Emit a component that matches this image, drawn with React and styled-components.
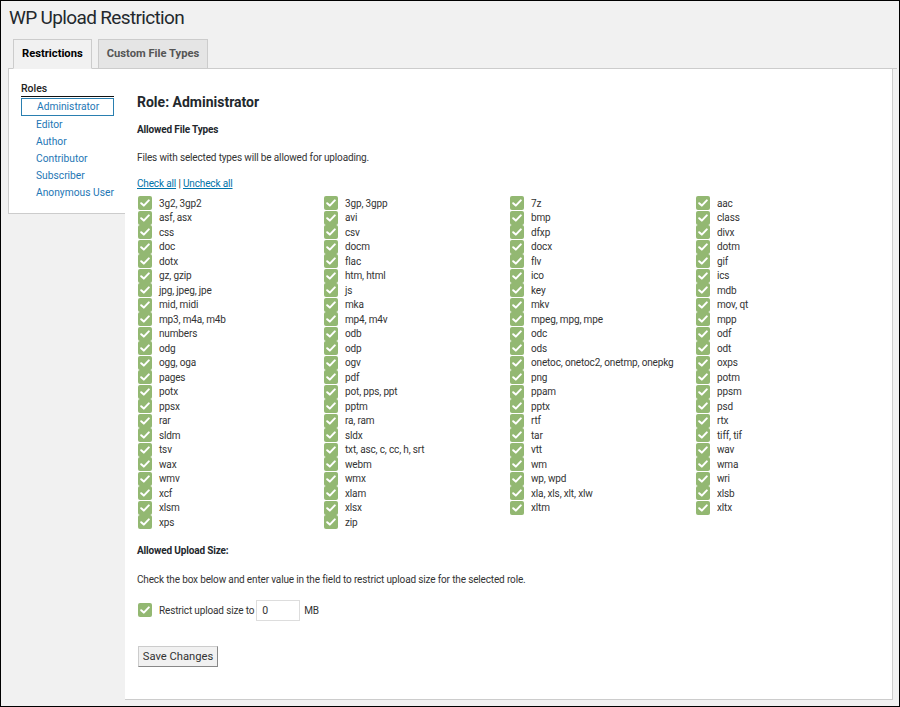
import styled, { createGlobalStyle } from 'styled-components';

const GlobalStyle = createGlobalStyle`
    html, body { margin: 0; padding: 0; }
    body {
        font-family: Roboto, "Liberation Sans", sans-serif;
        color: #333;
    }
`

const roles = ['Administrator', 'Editor', 'Author', 'Contributor', 'Subscriber', 'Anonymous User'];

const fileTypes = [
    '3g2, 3gp2', '3gp, 3gpp', '7z', 'aac',
    'asf, asx', 'avi', 'bmp', 'class',
    'css', 'csv', 'dfxp', 'divx',
    'doc', 'docm', 'docx', 'dotm',
    'dotx', 'flac', 'flv', 'gif',
    'gz, gzip', 'htm, html', 'ico', 'ics',
    'jpg, jpeg, jpe', 'js', 'key', 'mdb',
    'mid, midi', 'mka', 'mkv', 'mov, qt',
    'mp3, m4a, m4b', 'mp4, m4v', 'mpeg, mpg, mpe', 'mpp',
    'numbers', 'odb', 'odc', 'odf',
    'odg', 'odp', 'ods', 'odt',
    'ogg, oga', 'ogv', 'onetoc, onetoc2, onetmp, onepkg', 'oxps',
    'pages', 'pdf', 'png', 'potm',
    'potx', 'pot, pps, ppt', 'ppam', 'ppsm',
    'ppsx', 'pptm', 'pptx', 'psd',
    'rar', 'ra, ram', 'rtf', 'rtx',
    'sldm', 'sldx', 'tar', 'tiff, tif',
    'tsv', 'txt, asc, c, cc, h, srt', 'vtt', 'wav',
    'wax', 'webm', 'wm', 'wma',
    'wmv', 'wmx', 'wp, wpd', 'wri',
    'xcf', 'xlam', 'xla, xls, xlt, xlw', 'xlsb',
    'xlsm', 'xlsx', 'xltm', 'xltx',
    'xps', 'zip',
];

const Check = () => (
    <CheckBox>
        <svg width="10" height="8" viewBox="0 0 10 8">
            <path d="M1.2 4.2 L3.8 6.6 L8.8 1.4" fill="none" stroke="#fff" strokeWidth="2" strokeLinecap="round" strokeLinejoin="round" />
        </svg>
    </CheckBox>
)

const App = () => {
    return (
        <Page>
            <GlobalStyle />
            <Title>WP Upload Restriction</Title>
            <TabBar>
                <Tab active>Restrictions</Tab>
                <Tab>Custom File Types</Tab>
            </TabBar>
            <Body>
                <Sidebar>
                    <SideHead>Roles</SideHead>
                    {roles.map(role => (
                        <RoleItem key={role} active={role === 'Administrator'}>{role}</RoleItem>
                    ))}
                </Sidebar>
                <Content>
                    <Heading>Role: Administrator</Heading>
                    <SubHead>Allowed File Types</SubHead>
                    <Text $mt={14}>Files with selected types will be allowed for uploading.</Text>
                    <Links>
                        <Link>Check all</Link> | <Link>Uncheck all</Link>
                    </Links>
                    <TypeGrid>
                        {fileTypes.map(type => (
                            <TypeItem key={type}>
                                <Check />
                                <span>{type}</span>
                            </TypeItem>
                        ))}
                    </TypeGrid>
                    <SubHead $mt={14}>Allowed Upload Size:</SubHead>
                    <Text $mt={15}>Check the box below and enter value in the field to restrict upload size for the selected role.</Text>
                    <SizeRow>
                        <Check />
                        <SizeLabel>Restrict upload size to</SizeLabel>
                        <SizeInput defaultValue="0" />
                        <span>MB</span>
                    </SizeRow>
                    <SaveButton>Save Changes</SaveButton>
                </Content>
            </Body>
        </Page>
    )
}

export default App

const Page = styled.div`
    box-sizing: border-box;
    width: 900px;
    height: 707px;
    border: 1px solid #000;
    background: #f1f1f1;
    padding: 0 2px 0 7px;
    overflow: hidden;
`
const Title = styled.h1`
    margin: 0;
    padding: 5px 0 0 1px;
    font-size: 19px;
    line-height: 23px;
    letter-spacing: -0.65px;
    font-weight: 400;
    color: #23282d;
`
const TabBar = styled.div`
    display: flex;
    gap: 6px;
    margin-top: 10px;
    padding-left: 5px;
    border-bottom: 1px solid #ccc;
    height: 29px;
`
const Tab = styled.div`
    box-sizing: border-box;
    height: 30px;
    margin-bottom: -1px;
    display: flex;
    align-items: center;
    padding: 0 8px 1px;
    border: 1px solid #ccc;
    border-bottom-color: ${props => props.active ? '#f1f1f1' : '#ccc'};
    background: ${props => props.active ? '#f1f1f1' : '#e5e5e5'};
    color: ${props => props.active ? '#000' : '#555'};
    font-size: 11.2px;
    font-weight: 700;
`
const Body = styled.div`
    display: flex;
    align-items: flex-start;
    margin-right: 4px;
`
const Sidebar = styled.div`
    box-sizing: border-box;
    width: 117px;
    flex-shrink: 0;
    padding: 13px 11px 12px 12px;
    background: #fff;
    border-left: 1px solid #ccc;
    border-bottom: 1px solid #ccc;
`
const SideHead = styled.div`
    font-size: 10.5px;
    line-height: 14px;
    font-weight: 500;
    color: #222;
    border-bottom: 1px solid #111;
    margin-bottom: 1px;
`
const RoleItem = styled.div`
    box-sizing: border-box;
    height: ${props => props.active ? '18px' : '17px'};
    line-height: 16px;
    padding-left: ${props => props.active ? '15px' : '14px'};
    border: 1px solid ${props => props.active ? '#2a7fb0' : 'transparent'};
    font-size: 10.25px;
    color: #1e77b5;
    white-space: nowrap;
`
const Content = styled.div`
    box-sizing: border-box;
    flex: 1;
    height: 631px;
    padding: 24px 9px 0 12px;
    background: #fff;
    border-right: 1px solid #ccc;
    border-bottom: 1px solid #ccc;
    font-size: 10px;
    letter-spacing: -0.15px;
`
const Heading = styled.h2`
    margin: 0;
    font-size: 14px;
    line-height: 18px;
    font-weight: 700;
    letter-spacing: 0;
    color: #23282d;
`
const SubHead = styled.div`
    margin-top: ${props => props.$mt || 12}px;
    font-size: 10px;
    line-height: 14px;
    font-weight: 700;
    color: #23282d;
`
const Text = styled.div`
    margin-top: ${props => props.$mt}px;
    font-size: 10px;
    line-height: 14px;
    color: #333;
`
const Links = styled.div`
    margin-top: 12px;
    font-size: 10px;
    line-height: 14px;
    color: #333;
`
const Link = styled.a`
    color: #0073aa;
    text-decoration: underline;
    cursor: pointer;
`
const TypeGrid = styled.div`
    display: grid;
    grid-template-columns: repeat(4, 186px);
    grid-auto-rows: 14.5px;
    margin-top: 5px;
`
const TypeItem = styled.div`
    display: flex;
    align-items: center;
    gap: 7px;
    padding-left: 1px;
    font-size: 10px;
    color: #333;
    white-space: nowrap;
`
const CheckBox = styled.span`
    display: inline-flex;
    align-items: center;
    justify-content: center;
    width: 14px;
    height: 14px;
    flex-shrink: 0;
    border-radius: 2px;
    background: #93b872;
`
const SizeRow = styled.div`
    display: flex;
    align-items: center;
    margin-top: 13px;
    padding-left: 1px;
    height: 21px;
    font-size: 10px;
    color: #333;
`
const SizeLabel = styled.span`
    margin-left: 7px;
    margin-right: 2px;
`
const SizeInput = styled.input`
    box-sizing: border-box;
    width: 44px;
    height: 21px;
    margin: 0 4px 0 0;
    padding: 0 5px;
    border: 1px solid #ddd;
    font-family: Roboto, "Liberation Sans", sans-serif;
    font-size: 10.5px;
    color: #333;
    outline: none;
`
const SaveButton = styled.button`
    display: block;
    box-sizing: border-box;
    margin: 25px 0 0 1px;
    width: 80px;
    height: 21px;
    padding: 0;
    background: #f1f1f1;
    border: 1px solid #ccc;
    border-right-color: #888;
    border-bottom-color: #888;
    font-family: Roboto, "Liberation Sans", sans-serif;
    font-size: 11.2px;
    color: #333;
`
